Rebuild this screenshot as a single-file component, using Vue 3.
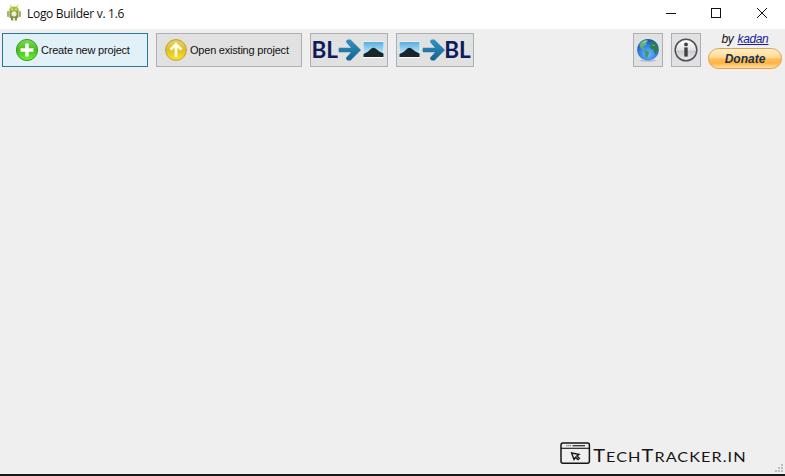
<script setup>
const appTitle = 'Logo Builder v. 1.6'
</script>

<template>
  <div class="window">
    <header class="titlebar">
      <svg class="app-icon" width="16" height="18" viewBox="0 0 16 18">
        <path d="M4 1 6 4M12 1 10 4" stroke="#b9c87c" stroke-width="1" />
        <path d="M3 7Q3 2.6 8 2.6T13 7Z" fill="#a9c32f" />
        <rect x="1" y="7" width="2.4" height="6" rx="1" fill="#a5b07e" />
        <rect x="12.6" y="7" width="2.4" height="6" rx="1" fill="#a5b07e" />
        <path d="M3.6 7h8.8v7H3.6z" fill="#8b9b3c" />
        <path d="M5 13h2.2v3.4H5zM8.8 13H11v3.4H8.8z" fill="#82913f" />
        <circle cx="8" cy="9.8" r="2.6" fill="#e9eedc" />
        <circle cx="6" cy="5.2" r=".6" fill="#fff" />
        <circle cx="10" cy="5.2" r=".6" fill="#fff" />
      </svg>
      <h1>{{ appTitle }}</h1>
      <svg class="controls" width="104" height="12" viewBox="0 0 104 12" fill="none" stroke="#111" stroke-width="1">
        <path d="M1 6.5H11" />
        <rect x="46.5" y="1.5" width="9" height="9" />
        <path d="M92 1 102 11M102 1 92 11" />
      </svg>
    </header>

    <nav class="toolbar">
      <button class="btn wide active">
        <svg width="24" height="24" viewBox="0 0 24 24">
          <defs>
            <linearGradient id="green" x1="0" y1="0" x2="0" y2="1">
              <stop offset="0" stop-color="#7fdc55" />
              <stop offset=".5" stop-color="#45c01d" />
              <stop offset="1" stop-color="#6cf52c" />
            </linearGradient>
          </defs>
          <circle cx="12" cy="12" r="10.6" fill="url(#green)" stroke="#3c9a2c" />
          <path d="M12 5.5v13M5.5 12h13" stroke="#fff" stroke-width="3.4" />
        </svg>
        <span>Create new project</span>
      </button>
      <button class="btn wide">
        <svg width="24" height="24" viewBox="0 0 24 24">
          <defs>
            <linearGradient id="gold" x1="0" y1="0" x2="0" y2="1">
              <stop offset="0" stop-color="#e8d26a" />
              <stop offset=".5" stop-color="#dfc020" />
              <stop offset="1" stop-color="#fbe62c" />
            </linearGradient>
          </defs>
          <circle cx="12" cy="12" r="10.4" fill="url(#gold)" stroke="#bfa032" />
          <path d="M12 19V7M6.5 11.8 12 6.3 17.5 11.8" fill="none" stroke="#fffbe6" stroke-width="2.8" />
        </svg>
        <span>Open existing project</span>
      </button>
      <button class="btn convert">
        <svg width="76" height="32" viewBox="0 0 76 32">
          <defs>
            <linearGradient id="sky" x1="0" y1="0" x2="0" y2="1">
              <stop offset="0" stop-color="#58afe2" />
              <stop offset=".7" stop-color="#b9e2f2" />
            </linearGradient>
            <linearGradient id="blue" x1="0" y1="0" x2="0" y2="1">
              <stop offset="0" stop-color="#3092c2" />
              <stop offset="1" stop-color="#17638f" />
            </linearGradient>
            <g id="arrow">
              <path d="M1 9.8H13L8.3 4.6Q7.5 2.6 10 1.5H12.5L23 12 12.5 22.5H10Q7.5 21.5 8.3 19.4L13 14.2H1Q0 12 1 9.8Z" fill="url(#blue)" />
            </g>
            <g id="photo">
              <path d="M0 0H21V16.5H0Z" fill="#f8fafb" />
              <path d="M.5 .5H20.5V15.5H.5Z" fill="url(#sky)" />
              <path d="M.5 12.4 4.5 10.4 8.8 6.8Q10.5 5.6 12.5 7L16 9.8 20.5 12V15.5H.5Z" fill="#18262c" />
            </g>
          </defs>
          <text class="bl" x="0.5" y="24.2" textLength="26.5" lengthAdjust="spacingAndGlyphs">BL</text>
          <use href="#arrow" x="27" y="4" />
          <use href="#photo" x="52" y="7.5" />
        </svg>
      </button>
      <button class="btn convert">
        <svg width="76" height="32" viewBox="0 0 76 32">
          <use href="#photo" x="2" y="7.5" />
          <use href="#arrow" x="25" y="4" />
          <text class="bl" x="47.3" y="24.2" textLength="26.5" lengthAdjust="spacingAndGlyphs">BL</text>
        </svg>
      </button>

      <div class="right">
        <button class="btn square">
          <svg width="24" height="24" viewBox="0 0 24 24">
            <defs>
              <radialGradient id="ocean" cx=".5" cy=".7" r=".65">
                <stop offset="0" stop-color="#74bcff" />
                <stop offset=".6" stop-color="#3380e6" />
                <stop offset="1" stop-color="#2550a8" />
              </radialGradient>
            </defs>
            <ellipse cx="12" cy="22.6" rx="8" ry="1.1" fill="#b9bfca" />
            <circle cx="12" cy="11.7" r="10.8" fill="url(#ocean)" />
            <path d="M3.2 6.4Q6 2.4 10 1.8L12 3 10 5 11 6.6 8 8.3 6.8 9.8 8.6 11.6 6.5 11.5 4.4 9.6Z" fill="#5db478" />
            <path d="M8.6 12.2 11 12.4 13.4 14.2 12.4 17 10.6 20.6 9.4 19 9 15.5Z" fill="#3aa05a" />
            <path d="M14.2 4.4 16.5 3 19.6 5.2 21.6 8.6 22 12 20.6 15 19.4 16.6 18.2 14 17.6 11.4 15 11 13.8 9.2 15.2 7.4Z" fill="#2b8048" />
            <path d="M5 5.4Q8 2.6 12 2.4L9 4.6Z" fill="#a0d3b0" />
            <path d="M16 7 18.8 7.6" stroke="#5b9ed6" />
          </svg>
        </button>
        <button class="btn square">
          <svg width="24" height="24" viewBox="0 0 24 24">
            <defs>
              <linearGradient id="silver" x1="0" y1="0" x2="0" y2="1">
                <stop offset="0" stop-color="#fff" />
                <stop offset=".5" stop-color="#e4e4e7" />
                <stop offset=".55" stop-color="#cacace" />
                <stop offset="1" stop-color="#efeff1" />
              </linearGradient>
            </defs>
            <circle cx="12" cy="12" r="10.8" fill="url(#silver)" stroke="#505055" stroke-width="1.5" />
            <circle cx="12" cy="6.4" r="1.9" fill="#414145" />
            <path d="M10.3 9.4H13.7V18.6H10.3Z" fill="#414145" />
          </svg>
        </button>
        <div class="credit">
          <p>by <a>kadan</a></p>
          <button class="donate">Donate</button>
        </div>
      </div>
    </nav>

    <main class="workspace">
      <svg class="brand" width="190" height="26" viewBox="0 0 190 26">
        <rect x="1" y="2" width="28.4" height="20.3" rx="2" fill="none" stroke="#161616" stroke-width="1.5" />
        <path d="M1 7.3H29.4" stroke="#161616" stroke-width="1.1" />
        <path d="M12.5 4.7H25" stroke="#333" stroke-width="1.3" />
        <path d="M6.4 4.7H11" stroke="#444" stroke-width="1.1" stroke-dasharray="1.1 .8" />
        <path d="M11.6 12 19 13.4 16.8 15 19.4 17.3 18 18.6 15.4 16.4 14 18.4Z" fill="none" stroke="#161616" stroke-width="1.4" />
        <text class="brand-text" x="33.2" y="21" textLength="153.4" lengthAdjust="spacingAndGlyphs"><tspan class="cap">T</tspan>ECH<tspan class="cap">T</tspan>RACKER.IN</text>
      </svg>
      <svg class="grip" width="9" height="9" viewBox="0 0 9 9" fill="#bdbdbd">
        <path d="M6 0h2v2H6zM3 3h2v2H3zM6 3h2v2H6zM0 6h2v2H0zM3 6h2v2H3zM6 6h2v2H6z" />
      </svg>
    </main>
  </div>
</template>

<style>
body {
  margin: 0;
  overflow: hidden;
}
</style>

<style scoped>
.window {
  box-sizing: border-box;
  width: 785px;
  height: 476px;
  display: flex;
  flex-direction: column;
  background: #efefef;
  border-bottom: 2px solid #17181b;
  font-family: "Liberation Sans", sans-serif;
  color: #111;
}
.titlebar {
  box-sizing: border-box;
  height: 29px;
  display: flex;
  align-items: center;
  padding: 0 16px 2px 6px;
  background: #fff;
}
.app-icon {
  margin-top: -1px;
}
h1 {
  margin: 0 0 0 5px;
  font: 12px/16px "Open Sans", "Noto Sans", sans-serif;
  letter-spacing: -.3px;
}
.controls {
  margin: -1px 0 0 auto;
}
.toolbar {
  display: flex;
  align-items: flex-start;
  gap: 8px;
  padding: 4px 3px 0 2px;
}
.btn {
  box-sizing: border-box;
  height: 34px;
  display: flex;
  align-items: center;
  padding: 0;
  border: 1px solid #adb0b2;
  border-radius: 0;
  background: #e1e1e1;
  font: 11px/14px "Liberation Sans", sans-serif;
  letter-spacing: -.2px;
  color: #111;
}
.wide {
  width: 146px;
  padding-left: 12px;
  gap: 2px;
  white-space: nowrap;
}
.wide:not(.active) {
  padding-left: 7px;
  letter-spacing: -.22px;
}
.active {
  background: #e2f0f7;
  border-color: #2a7899;
}
.convert {
  width: 78px;
}
.bl {
  font: bold 23px Lato, sans-serif;
  letter-spacing: 0;
  fill: #0d1b5c;
}
.right {
  display: flex;
  gap: 8px;
  margin-left: auto;
}
.square {
  width: 30px;
  justify-content: center;
}
.square svg {
  flex: none;
}
.credit {
  width: 74px;
  margin-left: -1px;
}
.credit p {
  margin: 0;
  height: 15px;
  text-align: center;
  font: italic 12px/13px "Liberation Sans", sans-serif;
  letter-spacing: -.35px;
}
.credit a {
  color: #1a1a9a;
  text-decoration: underline;
  margin-left: 1px;
}
.donate {
  box-sizing: border-box;
  display: block;
  width: 74px;
  height: 21px;
  padding: 0;
  border: 1px solid #e5a143;
  border-radius: 11px;
  background: linear-gradient(#fff0cf 0, #ffd98c 45%, #ffbe58 52%, #ffb545 75%, #ffe0a0 100%);
  font: italic bold 12px/18px "Liberation Sans", sans-serif;
  color: #17304f;
}
.workspace {
  flex: 1;
  display: flex;
  align-items: flex-end;
  justify-content: flex-end;
}
.brand {
  margin: 0 25px 7px 0;
}
.brand .brand-text {
  font: 14.2px Lato, sans-serif;
  letter-spacing: .9px;
  fill: #161616;
}
.brand-text .cap {
  font-size: 17.5px;
}
.grip {
  margin: 0 1px 1px 0;
}
</style>
